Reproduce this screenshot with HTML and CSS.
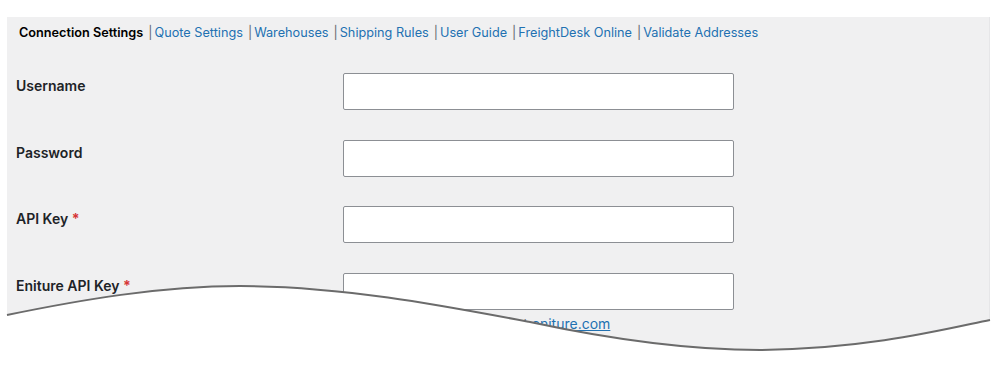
FILE: index.html
```html
<!DOCTYPE html>
<html>
<head>
<meta charset="utf-8">
<link rel="stylesheet" href="styles.css">
</head>
<body>
<div class="panel">
  <nav class="tabs">
    <span class="tab current">Connection Settings</span>
    <span class="sep">|</span><a class="tab" href="#">Quote Settings</a>
    <span class="sep">|</span><a class="tab" href="#">Warehouses</a>
    <span class="sep">|</span><a class="tab" href="#">Shipping Rules</a>
    <span class="sep">|</span><a class="tab" href="#">User Guide</a>
    <span class="sep">|</span><a class="tab" href="#">FreightDesk Online</a>
    <span class="sep">|</span><a class="tab" href="#">Validate Addresses</a>
  </nav>
  <div class="form">
    <label class="label">Username</label>
    <div class="field"><input class="input" type="text"></div>
    <label class="label">Password</label>
    <div class="field"><input class="input" type="password"></div>
    <label class="label">API Key <span class="req">*</span></label>
    <div class="field"><input class="input" type="text"></div>
    <label class="label">Eniture API Key <span class="req">*</span></label>
    <div class="field">
      <input class="input" type="text">
      <p class="desc">Obtain an Eniture API Key at <a href="#">eniture.com</a></p>
    </div>
  </div>
</div>
<svg class="wave" width="1000" height="375" viewBox="0 0 1000 375">
  <path class="wave-fill" d="M7,315 C80,300 160,286 240,286 C340,286 440,305 530,322 C600,337 680,350 760,350 C870,349 950,328 990,320 L1000,320 L1000,375 L0,375 L0,315 Z"/>
  <path class="wave-line" d="M7,315 C80,300 160,286 240,286 C340,286 440,305 530,322 C600,337 680,350 760,350 C870,349 950,328 990,320"/>
</svg>
</body>
</html>
```
FILE: styles.css
```css
html, body {
  margin: 0;
  padding: 0;
  background: #ffffff;
  width: 1000px;
  height: 375px;
  overflow: hidden;
  font-family: Inter, "Liberation Sans", Arial, sans-serif;
  color: #1d2327;
}
.panel {
  margin: 17px 0 0 7px;
  width: 983px;
  height: 358px;
  background: #f0f0f1;
  box-sizing: border-box;
  padding: 0 0 0 9px;
  border-right: 1px solid #e6e6e8;
}
.tabs {
  display: flex;
  align-items: center;
  height: 31px;
  padding-left: 3px;
  font-size: 12.7px;
  white-space: nowrap;
}
.tab {
  color: #2271b1;
  text-decoration: none;
}
.tab.current {
  color: #000;
  font-weight: 600;
}
.sep {
  color: #646970;
  margin: 0 2px 0 5px;
}
.form {
  display: grid;
  grid-template-columns: 327px 391px;
  row-gap: 29.5px;
  margin-top: 25px;
}
.label {
  font-size: 14px;
  font-weight: 600;
  padding-top: 5px;
  line-height: 16px;
}
.req {
  color: #d63638;
  font-weight: 700;
}
.field {
  display: flex;
  flex-direction: column;
}
.input {
  box-sizing: border-box;
  width: 391px;
  height: 37px;
  margin: 0;
  border: 1px solid #8c8f94;
  border-radius: 2px;
  background: #fff;
}
.desc {
  margin: 6px 0 0;
  font-size: 14px;
  line-height: 16px;
  color: #50575e;
}
.desc a {
  color: #2271b1;
}
.wave {
  position: absolute;
  left: 0;
  top: 0;
}
.wave-fill {
  fill: #ffffff;
}
.wave-line {
  fill: none;
  stroke: #6b6b6b;
  stroke-width: 2;
}
```
